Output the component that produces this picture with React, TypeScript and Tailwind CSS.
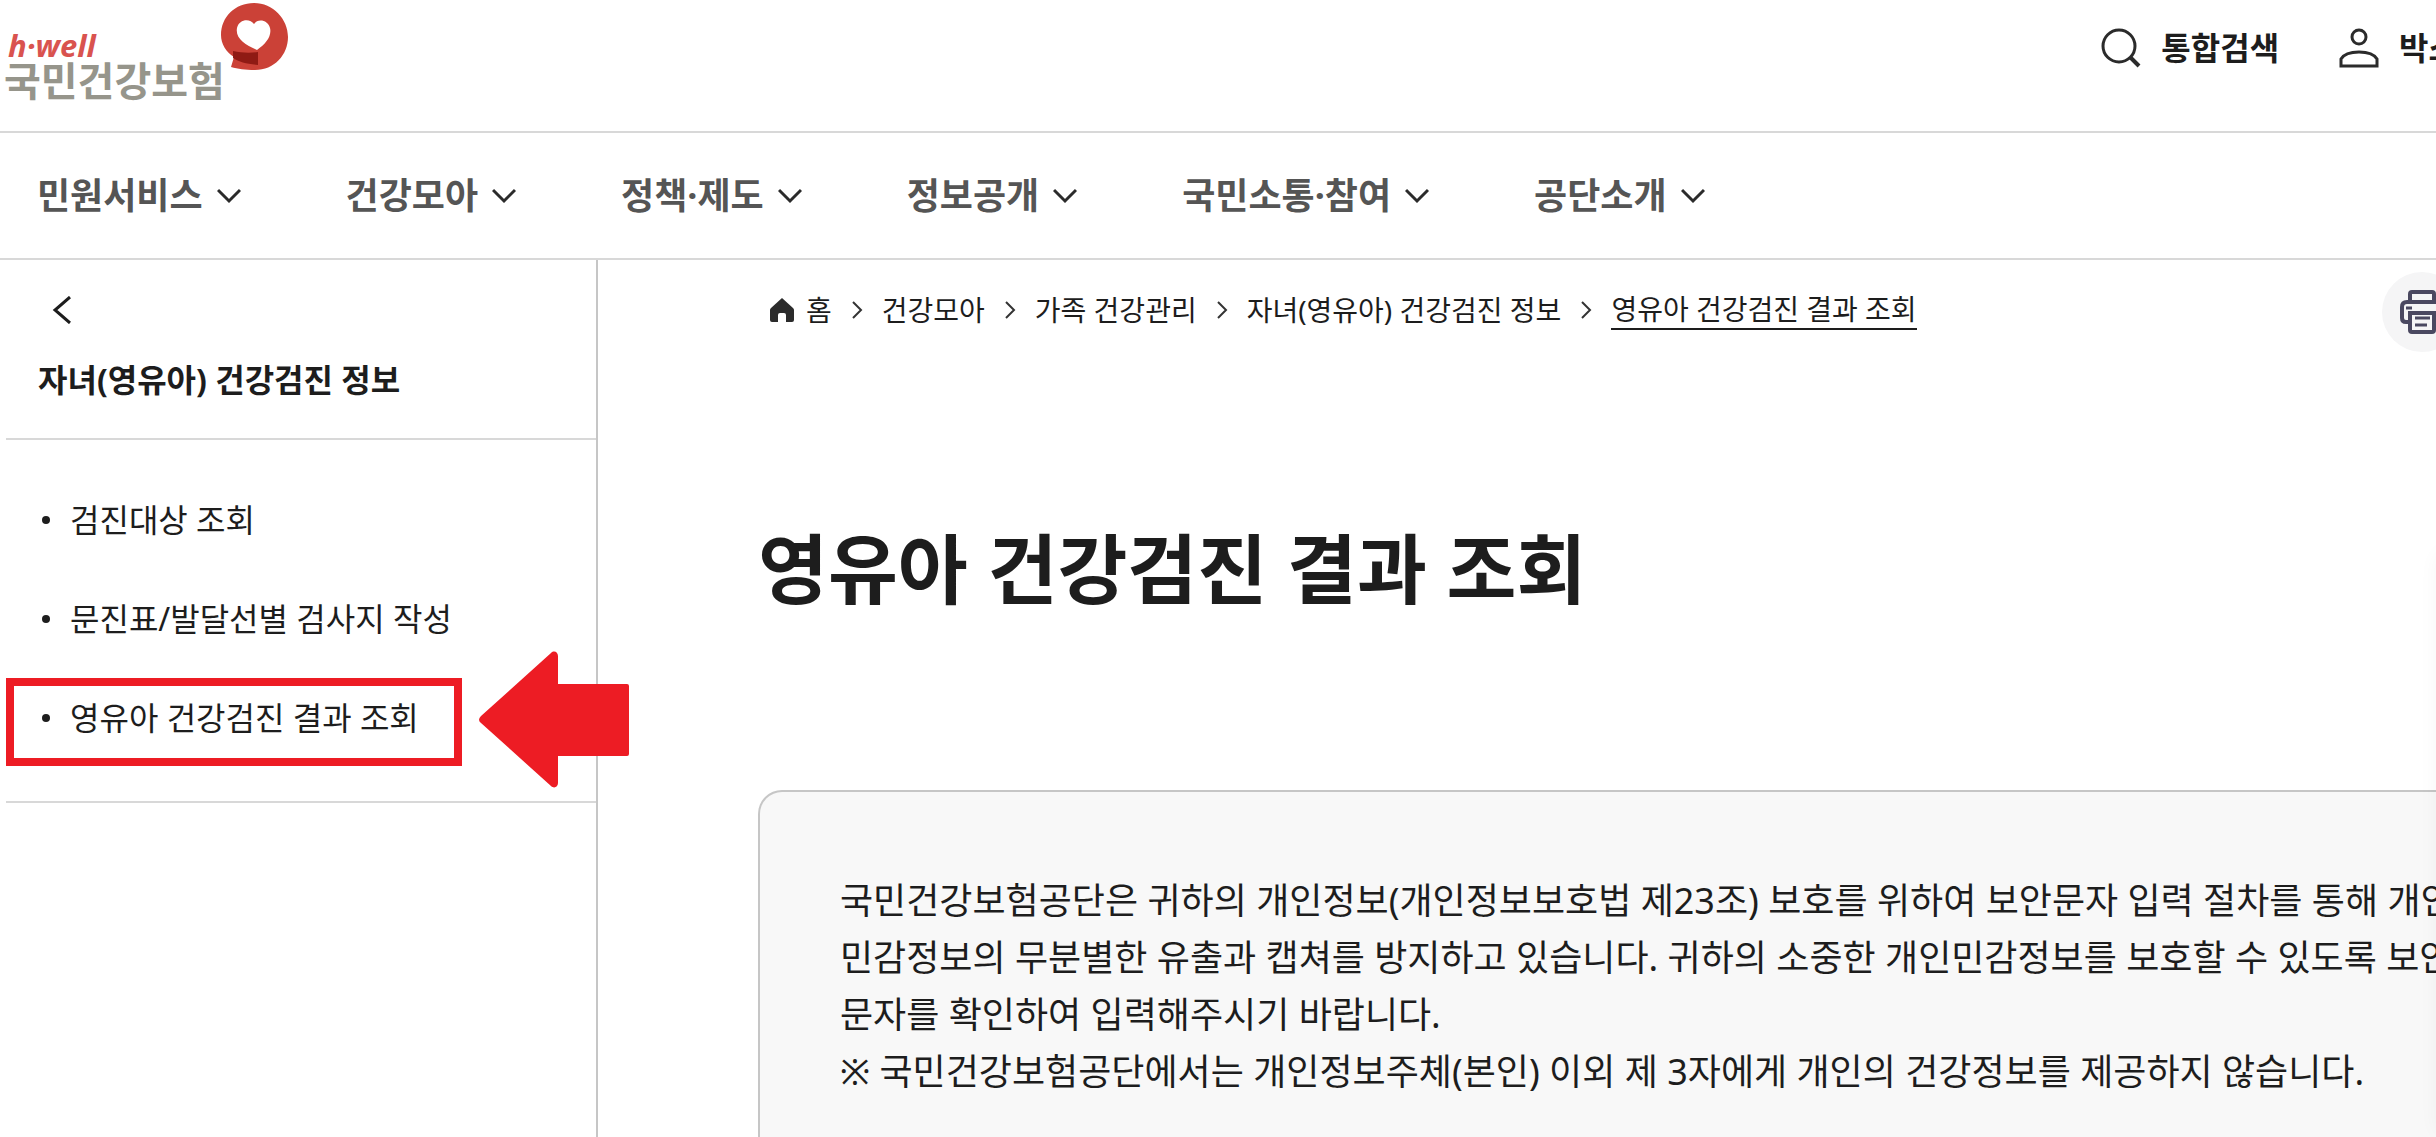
import { Fragment } from "react";

const menus = ["민원서비스", "건강모아", "정책·제도", "정보공개", "국민소통·참여", "공단소개"];

const crumbs = ["건강모아", "가족 건강관리", "자녀(영유아) 건강검진 정보"];

const sideLinks = [
  { label: "검진대상 조회", marked: false },
  { label: "문진표/발달선별 검사지 작성", marked: false },
  { label: "영유아 건강검진 결과 조회", marked: true },
];

function Logo() {
  return (
    <a href="#" aria-label="국민건강보험" className="flex h-[131px] pl-1">
      <div className="flex flex-col pt-7">
        <span className="pl-1 text-[31px] leading-[34px] font-bold text-[#d9534f] italic">h·well</span>
        <span className="text-[40px] leading-[38px] font-bold text-[#96958b]">국민건강보험</span>
      </div>
      <svg className="-ml-[6px] mt-[2px] h-[70px] w-[70px]" viewBox="0 0 70 70" fill="none">
        <path
          d="M35 1C16 1 2 15 2 33c0 9 5 17 13 22l-3 10c7 2 14 3 24 3 19 0 33-15 33-33S54 1 35 1Z"
          fill="#cb4137"
        />
        <path
          d="M35 22c-4-6-15-5-17 4-2 11 9 17 20 22 9-6 15-14 13-22-2-8-12-10-16-4Z"
          fill="#fff"
        />
        <path d="M14 49c9 2 18 2 25 1v13c-11-1-19-3-25-7Z" fill="#8f1a14" />
      </svg>
    </a>
  );
}

function Header() {
  return (
    <header>
      <div className="flex items-start justify-between border-b-2 border-[#d8d8d8]">
        <Logo />
        <div className="-mr-[22px] flex items-center pt-6 text-[32px] leading-[48px] font-bold text-[#1d1d1d]">
          <button className="mr-[60px] flex items-center gap-5">
            <svg width="40" height="40" viewBox="0 0 40 40" fill="none" stroke="#2b2b2b" strokeWidth="3">
              <circle cx="18" cy="18" r="16" />
              <path d="m29 29 9 9" strokeWidth="4" />
            </svg>
            통합검색
          </button>
          <button className="flex items-center gap-5">
            <svg width="40" height="40" viewBox="0 0 40 40" fill="none" stroke="#2b2b2b" strokeWidth="3">
              <circle cx="20" cy="9" r="7" />
              <path d="M2 38V31c3-5 10-7 18-7s15 2 18 7v7Z" />
            </svg>
            박소
          </button>
        </div>
      </div>
      <nav className="flex h-[127px] items-center gap-[105px] border-b-2 border-[#d8d8d8] pl-[37px]">
        {menus.map((menu) => (
          <button key={menu} className="flex items-center gap-[14px] text-[36px] leading-[54px] font-bold text-[#555]">
            {menu}
            <svg width="24" height="16" viewBox="0 0 24 16" fill="none" stroke="#2b2b2b" strokeWidth="3">
              <path d="m1 2 11 11L23 2" />
            </svg>
          </button>
        ))}
      </nav>
    </header>
  );
}

function Sidebar() {
  return (
    <aside className="relative w-[598px] shrink-0 border-r-2 border-[#c6c6c6] pl-[6px]">
      <div className="border-b-2 border-[#d8d8d8] pt-9 pb-[34px] pl-8">
        <button aria-label="이전" className="block pl-[14px]">
          <svg width="20" height="28" viewBox="0 0 20 28" fill="none" stroke="#1d1d1d" strokeWidth="3">
            <path d="M18 1 3 14l15 13" />
          </svg>
        </button>
        <h2 className="mt-8 text-[32px] leading-[48px] font-bold text-[#1d1d1d]">자녀(영유아) 건강검진 정보</h2>
      </div>
      <ul className="border-b-2 border-[#d8d8d8] pt-[30px] pb-[34px] text-[32px] leading-[48px] text-[#1d1d1d]">
        {sideLinks.map(({ label, marked }) => (
          <li key={label} className="flex h-[99px] items-center">
            <a
              href="#"
              className={
                marked
                  ? "mt-2 flex h-[88px] w-[456px] items-center gap-5 border-8 border-[#ed1c24] pb-2 pl-7"
                  : "flex items-center gap-5 pl-9"
              }
            >
              <span className="h-2 w-2 rounded-full bg-[#1d1d1d]" />
              {label}
            </a>
          </li>
        ))}
      </ul>
      {/* red pointer on top of the sidebar edge */}
      <svg className="absolute top-[391px] left-[479px]" width="150" height="137" viewBox="0 0 150 137">
        <path
          d="M2 65 72 2c3-3 7-1 7 3v28h69q2 0 2 2v68q0 2-2 2H79v27c0 4-4 6-7 3L2 72q-4-3 0-7Z"
          fill="#ed1c24"
        />
      </svg>
    </aside>
  );
}

function PrintIcon() {
  return (
    <svg width="44" height="44" viewBox="0 0 44 44" fill="none" stroke="#4a4860" strokeWidth="4">
      <path d="M10 12V4q0-2 2-2h20q2 0 2 2v8" />
      <path d="M10 32H6q-4 0-4-4V17q0-5 5-5h30q5 0 5 5v11q0 4-4 4h-4" />
      <path d="M10 23h24v17q0 2-2 2H12q-2 0-2-2Z" />
      <path d="M6 18h6M15 28h15M15 35h12" strokeWidth="3" />
    </svg>
  );
}

function Separator() {
  return (
    <svg width="12" height="18" viewBox="0 0 12 18" fill="none" stroke="#333" strokeWidth="2">
      <path d="m2 1 8 8-8 8" />
    </svg>
  );
}

export default function App() {
  return (
    <div className="relative flex min-h-screen w-full flex-col overflow-hidden bg-white font-['Noto_Sans','Noto_Sans_CJK_KR',sans-serif] whitespace-nowrap">
      <Header />
      <div className="flex flex-1">
        <Sidebar />
        <main className="flex min-w-0 flex-1 flex-col pl-40">
          <div className="-mr-[26px] flex items-center justify-between pt-3 pl-3">
            <nav
              aria-label="breadcrumb"
              className="flex items-center gap-[19px] pb-1 text-[28px] leading-[38px] text-[#1d1d1d]"
            >
              <a href="#" className="flex items-center gap-3">
                <svg width="24" height="24" viewBox="0 0 24 24" fill="#2b2b2b">
                  <path d="M12 0 23 10q1 1 1 2v10q0 2-2 2h-6v-7q0-2-2-2h-4q-2 0-2 2v7H2q-2 0-2-2V12q0-1 1-2Z" />
                </svg>
                홈
              </a>
              {crumbs.map((crumb) => (
                <Fragment key={crumb}>
                  <Separator />
                  <a href="#">{crumb}</a>
                </Fragment>
              ))}
              <Separator />
              <a href="#" aria-current="page" className="border-b-2 border-[#1d1d1d]">
                영유아 건강검진 결과 조회
              </a>
            </nav>
            <button aria-label="인쇄" className="flex h-20 w-20 items-center justify-center rounded-full bg-[#f5f5f6]">
              <PrintIcon />
            </button>
          </div>
          <h1 className="mt-40 text-[76px] leading-[114px] font-bold text-[#1d1d1d]">영유아 건강검진 결과 조회</h1>
          <section className="mt-[164px] -mr-10 flex-1 rounded-tl-3xl border-2 border-b-0 border-[#c6c6c6] bg-[#f8f8f8] px-20 pt-20 text-[36px] leading-[57px] text-[#1d1d1d]">
            <p>
              국민건강보험공단은 귀하의 개인정보(개인정보보호법 제23조) 보호를 위하여 보안문자 입력 절차를 통해 개인
              <br />
              민감정보의 무분별한 유출과 캡쳐를 방지하고 있습니다. 귀하의 소중한 개인민감정보를 보호할 수 있도록 보안
              <br />
              문자를 확인하여 입력해주시기 바랍니다.
            </p>
            <p>※ 국민건강보험공단에서는 개인정보주체(본인) 이외 제 3자에게 개인의 건강정보를 제공하지 않습니다.</p>
          </section>
        </main>
      </div>
      {/* quick menu parked off the right edge, only its shadow shows */}
      <div className="absolute top-[550px] -right-10 bottom-0 w-10 rounded-l-2xl shadow-[0_0_20px_rgba(0,0,0,0.04)]" />
    </div>
  );
}
